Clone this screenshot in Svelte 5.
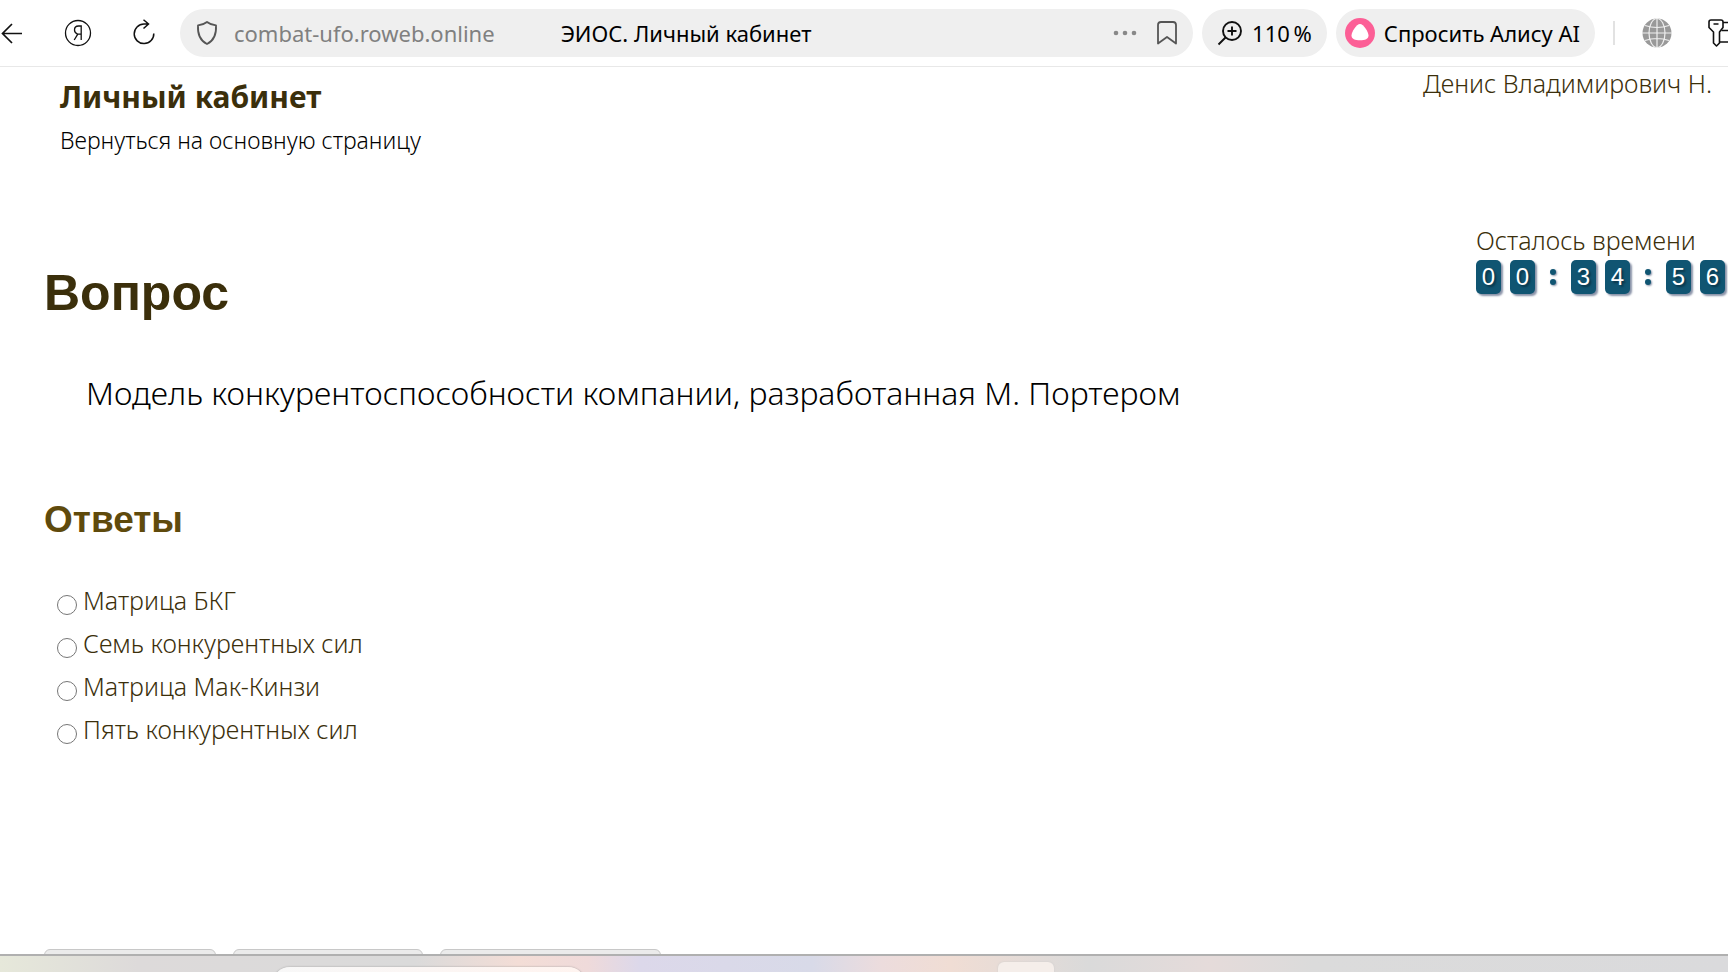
<script lang="ts">
  const answers = ['Матрица БКГ', 'Семь конкурентных сил', 'Матрица Мак-Кинзи', 'Пять конкурентных сил'];
  const actions = [
    { size: 'small', label: 'Назад' },
    { size: 'medium', label: 'Ответить' },
    { size: 'large', label: 'Завершить' },
  ];

  let remaining = $state(34 * 60 + 56);
  let selected = $state('');

  const pad = (n: number) => String(n).padStart(2, '0');

  let clock = $derived([
    pad(Math.floor(remaining / 3600)),
    pad(Math.floor(remaining / 60) % 60),
    pad(remaining % 60),
  ]);
</script>

<div class="window">
  <header class="toolbar">
    <button class="icon back" aria-label="Назад">
      <svg width="24" height="24" viewBox="0 0 24 24" fill="none" stroke="#111" stroke-width="1.700">
        <path d="M22 12.500H2.500M12 3L2.500 12.500L12 22" />
      </svg>
    </button>
    <button class="icon home" aria-label="Яндекс">
      <svg width="28" height="28" viewBox="0 0 28 28" fill="none" stroke="#111" stroke-width="1.300">
        <circle cx="14" cy="14" r="12.500" />
        <path d="M17.200 21V7H14.500C12 7 10.500 8.600 10.500 11C10.500 13 11.500 14.200 13.500 15.200H17M13.800 15.200L10.200 21" />
      </svg>
    </button>
    <button class="icon reload" aria-label="Обновить">
      <svg width="24" height="28" viewBox="0 0 24 28" fill="none" stroke="#111" stroke-width="1.500">
        <path d="M16.500 5H12A9.800 9.800 0 1 0 21.800 14.500M11.500 .8L16.500 5L11.500 9.500" />
      </svg>
    </button>

    <div class="address">
      <svg width="22" height="26" viewBox="0 0 22 26" fill="none" stroke="#555" stroke-width="1.800" stroke-linejoin="round">
        <path d="M11 2C8.500 4 5.500 5 2 5.300C1.500 13.500 3.500 20.500 11 24C18.500 20.500 20.500 13.500 20 5.300C16.500 5 13.500 4 11 2Z" />
      </svg>
      <span class="url">combat-ufo.roweb.online</span>
      <span class="title">ЭИОС. Личный кабинет</span>
      <button class="icon" aria-label="Ещё">
        <svg width="24" height="6" viewBox="0 0 24 6" fill="#888">
          <circle cx="3" cy="3" r="2.300" />
          <circle cx="12" cy="3" r="2.300" />
          <circle cx="21" cy="3" r="2.300" />
        </svg>
      </button>
      <button class="icon bookmark" aria-label="В закладки">
        <svg width="20" height="24" viewBox="0 0 20 24" fill="none" stroke="#555" stroke-width="1.800" stroke-linejoin="round">
          <path d="M1 22.500V4A3 3 0 0 1 4 1H16A3 3 0 0 1 19 4V22.500L10 16Z" />
        </svg>
      </button>
    </div>

    <button class="pill zoom">
      <svg width="26" height="26" viewBox="0 0 26 26" fill="none" stroke="#111" stroke-width="1.900">
        <circle cx="15" cy="11" r="9" />
        <path d="M15 6.500V15.500M10.500 11H19.500M8.500 17.500L1.500 24.500" />
      </svg>
      110&#8239;%
    </button>

    <button class="pill alice">
      <svg width="30" height="30" viewBox="0 0 30 30">
        <circle cx="15" cy="15" r="15" fill="#fc5f96" />
        <path d="M15 6C18.500 6 23.500 14 23.500 17.500C23.500 21 20 22.300 15 22.300S6.500 21 6.500 17.500C6.500 14 11.500 6 15 6Z" fill="#fff" />
      </svg>
      Спросить Алису AI
    </button>

    <span class="divider"></span>

    <button class="icon globe" aria-label="Перевод">
      <svg width="30" height="30" viewBox="0 0 30 30" fill="none" stroke="#efefef" stroke-width="1.200">
        <circle cx="15" cy="15" r="14.500" fill="#999" stroke="none" />
        <path d="M15 0V30M0 15H30M3 7.500Q15 11.500 27 7.500M3 22.500Q15 18.500 27 22.500" />
        <ellipse cx="15" cy="15" rx="8" ry="14.500" />
      </svg>
    </button>
    <button class="icon keys" aria-label="Пароли">
      <svg width="30" height="28" viewBox="0 0 30 28" fill="none" stroke="#111" stroke-width="1.600" stroke-linejoin="round">
        <path d="M3 1H13A2 2 0 0 1 15 3V8.500L11.500 13V24L8.500 27L5.500 24V13L1 8.500V3A2 2 0 0 1 3 1ZM5.500 5H10.500" />
        <path d="M15 3.500H26A2 2 0 0 1 28 5.500V21A2 2 0 0 1 26 23H11.500M13.500 11.500H20" />
      </svg>
    </button>
  </header>

  <main>
    <div class="top">
      <div class="brand">
        <p class="name">Личный кабинет</p>
        <a href="/">Вернуться на основную страницу</a>
      </div>
      <span class="user">Денис Владимирович Н.</span>
    </div>

    <div class="heading">
      <h1>Вопрос</h1>
      <div class="timer">
        <span>Осталось времени</span>
        <div class="clock">
          {#each clock as part, i}
            {#if i > 0}
              <span class="colon"></span>
            {/if}
            {#each part as digit}
              <span class="digit">{digit}</span>
            {/each}
          {/each}
        </div>
      </div>
    </div>

    <p class="question">Модель конкурентоспособности компании, разработанная М. Портером</p>

    <h2>Ответы</h2>
    <div class="answers">
      {#each answers as answer}
        <label>
          <input type="radio" name="answer" value={answer} bind:group={selected} />
          <span>{answer}</span>
        </label>
      {/each}
    </div>

    <div class="actions">
      {#each actions as action}
        <button class={action.size} aria-label={action.label}></button>
      {/each}
    </div>
  </main>

  <footer class="taskbar">
    <div class="search"></div>
    <div class="app"></div>
  </footer>
</div>

<style>
  :global(body) {
    background: #fff;
  }

  .window {
    display: flex;
    flex-direction: column;
    height: 100vh;
    overflow: hidden;
    font-family: 'Noto Sans', 'Open Sans', sans-serif;
    font-weight: 300;
    color: #3b2f0b;
  }

  button {
    border: 0;
    padding: 0;
    background: none;
    font: inherit;
    color: inherit;
    cursor: pointer;
  }

  p,
  h1,
  h2 {
    margin: 0;
  }

  svg {
    display: block;
    flex: none;
  }

  .toolbar {
    display: flex;
    align-items: center;
    flex: none;
    height: 66px;
    border-bottom: 1px solid #e8e8e8;
    font-size: 22px;
    font-weight: 400;
    color: #000;
    white-space: nowrap;
  }

  .icon {
    flex: none;
  }

  .home {
    margin-left: 40px;
  }

  .reload {
    margin: 0 24px 0 40px;
  }

  .address {
    display: flex;
    align-items: center;
    flex: 1;
    gap: 16px;
    height: 48px;
    padding: 0 16px;
    border-radius: 24px;
    background: #efefef;
  }

  .url {
    color: #808080;
  }

  .title {
    flex: 1;
    margin-left: 50px;
  }

  .bookmark {
    margin-left: 4px;
  }

  .pill {
    display: flex;
    align-items: center;
    flex: none;
    gap: 9px;
    height: 48px;
    margin-left: 9px;
    padding: 0 15px;
    border-radius: 24px;
    background: #efefef;
  }

  .alice {
    padding-left: 9px;
  }

  .divider {
    width: 2px;
    height: 24px;
    margin: 0 27px 0 18px;
    background: #e2e2e2;
  }

  .keys {
    width: 20px;
    margin-left: 36px;
  }

  main {
    flex: 1;
    min-height: 0;
    overflow: hidden;
  }

  .top {
    display: flex;
    justify-content: space-between;
    padding: 0 16px 0 60px;
  }

  .brand {
    padding-top: 10px;
  }

  .name {
    font-size: 30px;
    font-weight: 700;
    line-height: 40px;
  }

  .brand a {
    font-size: 23px;
    line-height: 46px;
    color: #000;
    text-decoration: none;
  }

  .user {
    font-size: 25px;
    line-height: 32px;
  }

  .heading {
    display: flex;
    justify-content: space-between;
    margin-top: 60px;
    padding-left: 44px;
  }

  h1,
  h2 {
    font-family: 'Liberation Sans', Arial, sans-serif;
    font-weight: 700;
  }

  h1 {
    padding-top: 41px;
    font-size: 50px;
    line-height: 58px;
  }

  .timer {
    font-size: 25px;
    line-height: 34px;
  }

  .clock {
    display: flex;
    gap: 9px;
    padding: 3px 3px 0 0;
  }

  .digit {
    width: 25px;
    height: 34px;
    border-radius: 5px;
    background: #105572;
    box-shadow: 2px 2px 2px #8a93a8;
    font-family: 'Liberation Sans', Arial, sans-serif;
    font-size: 24px;
    font-weight: 400;
    text-align: center;
    text-shadow: 2px 2px 2px #0a3548;
    color: #fff;
  }

  .colon {
    display: flex;
    flex-direction: column;
    align-items: center;
    justify-content: center;
    gap: 4px;
    width: 18px;
  }

  .colon::before,
  .colon::after {
    content: '';
    width: 6px;
    height: 6px;
    border-radius: 50%;
    background: #105572;
    box-shadow: 1px 1px 2px #8a93a8;
  }

  .question {
    padding: 47px 86px 0;
    font-size: 32px;
    line-height: 48px;
    color: #000;
  }

  h2 {
    padding: 81px 44px 0;
    font-size: 37px;
    line-height: 44px;
    color: #5f4a0c;
  }

  .answers {
    display: grid;
    justify-content: start;
    padding: 37px 57px 0;
    font-size: 25px;
    line-height: 43px;
  }

  .answers label {
    display: flex;
    align-items: center;
    gap: 6px;
  }

  .answers input {
    width: 20px;
    height: 20px;
    margin: 8px 0 0;
  }

  .actions {
    display: flex;
    gap: 17px;
    padding: 198px 44px 0;
  }

  .actions button {
    height: 48px;
    border: 1px solid #c8c8c8;
    border-radius: 6px;
    background: #ebebeb;
  }

  .actions .small {
    width: 172px;
  }

  .actions .medium {
    width: 190px;
  }

  .actions .large {
    width: 221px;
  }

  .taskbar {
    display: flex;
    flex: none;
    gap: 412px;
    height: 16px;
    padding-left: 272px;
    border-top: 2px solid #b0b0b0;
    overflow: hidden;
    background: linear-gradient(90deg, #e6e8da, #dddada 8%, #dadada 24%, #f3ddd6 30%, #efdada 34%, #dcd8ea 37%, #d8dae8 47%, #ecdcdd 51%, #f0ddd4 55%, #dadada 63%, #e5dbda 70%, #dbdbdb 76%, #dadadc);
  }

  .search {
    width: 314px;
    height: 40px;
    margin-top: 11px;
    border-radius: 18px;
    background: linear-gradient(90deg, #f8f8f8, #fff4f0);
    box-shadow: 0 0 2px #999;
  }

  .app {
    width: 56px;
    height: 40px;
    margin-top: 6px;
    border-radius: 6px;
    background: #f5eeea;
    box-shadow: 0 0 2px #ccc;
  }
</style>
